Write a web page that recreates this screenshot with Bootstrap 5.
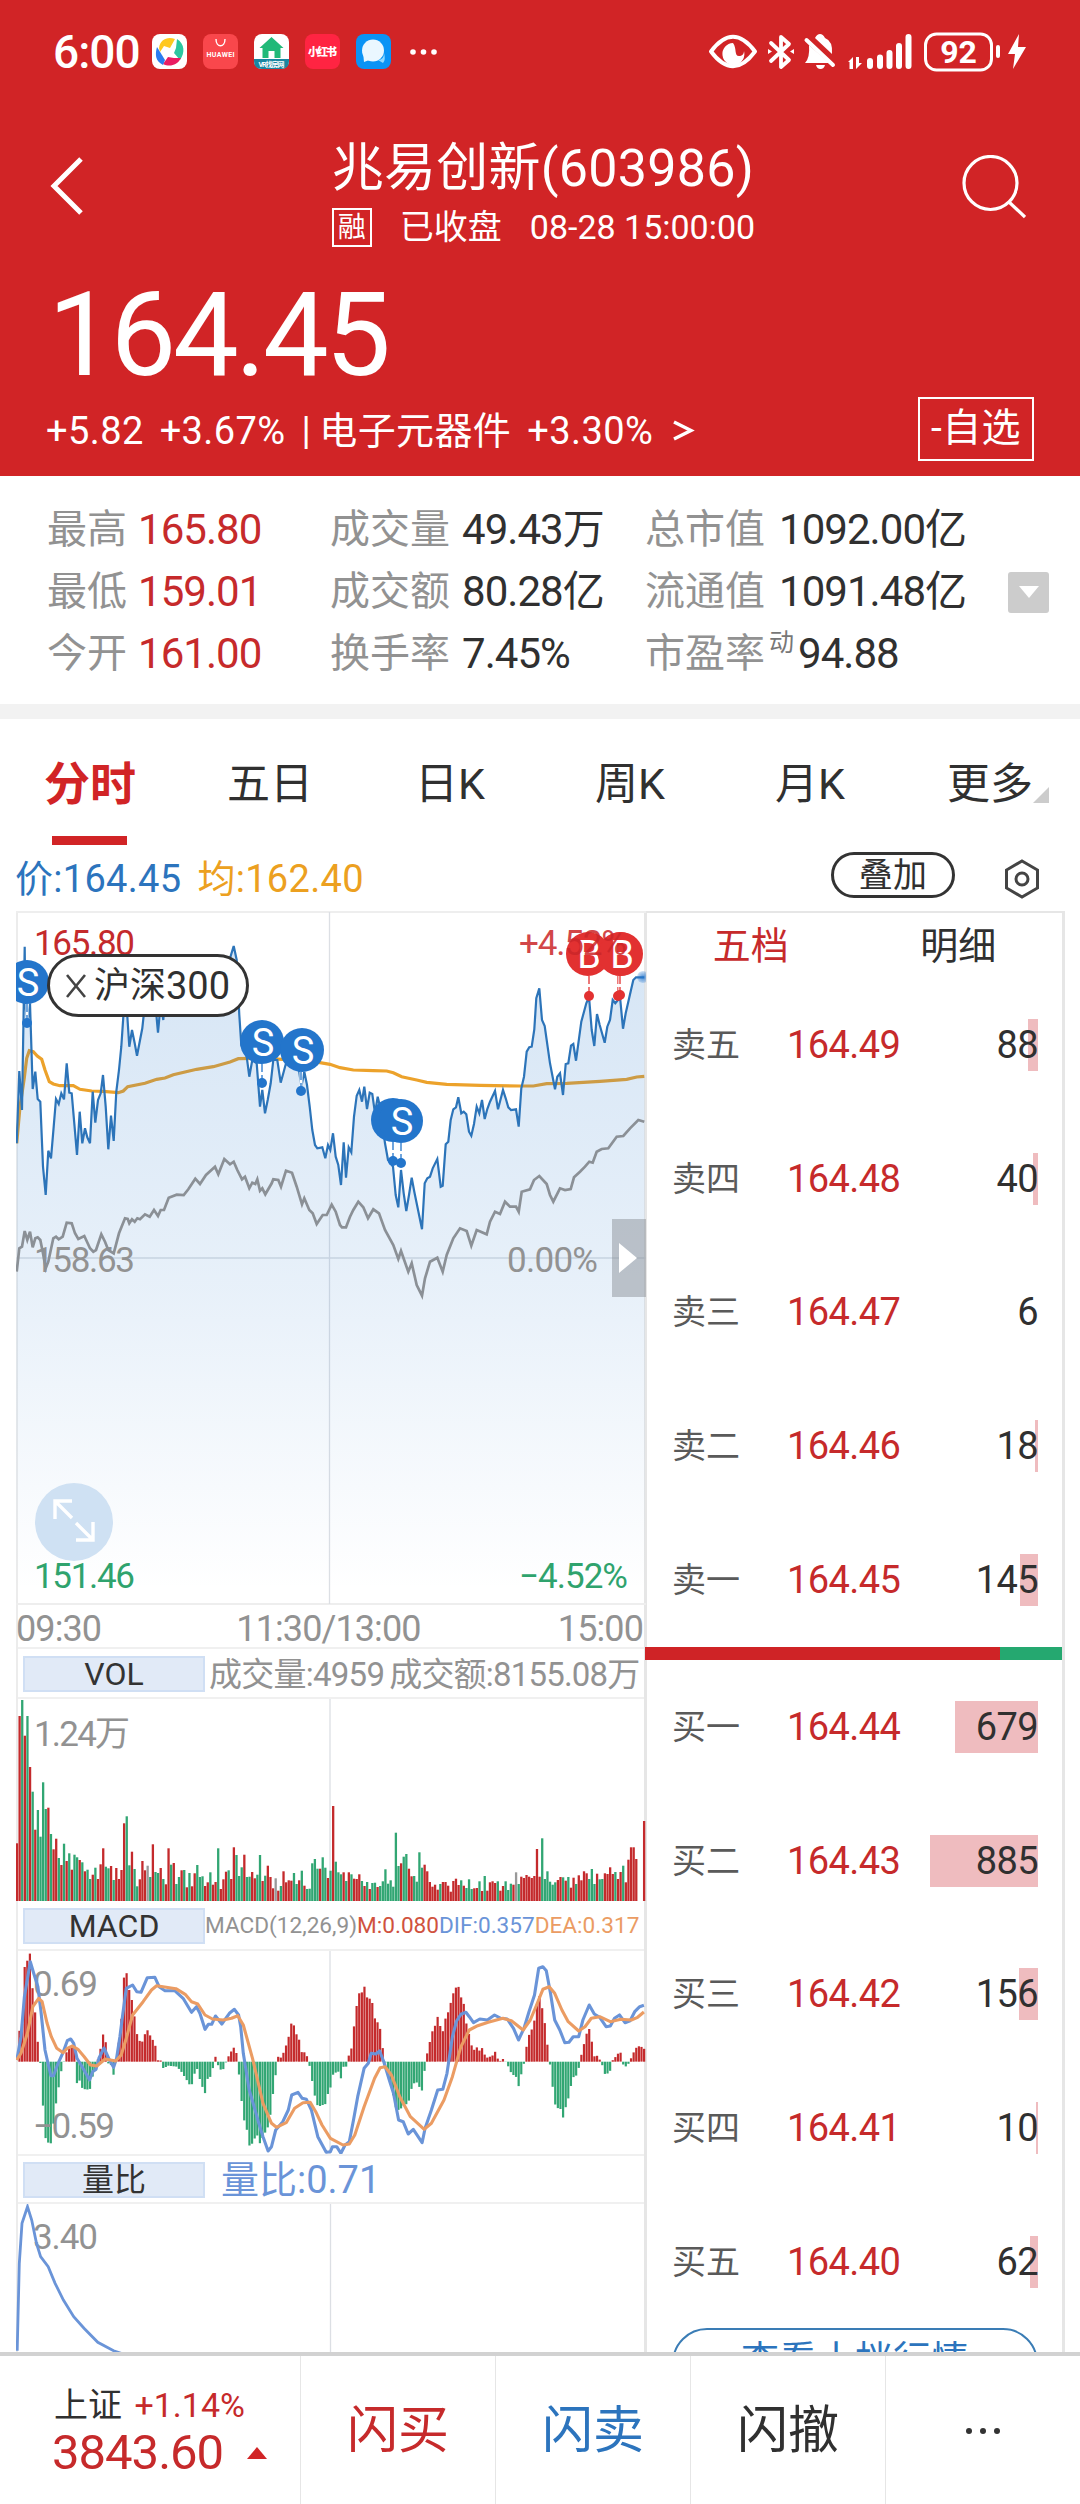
<!DOCTYPE html>
<html lang="zh-CN">
<head>
<meta charset="utf-8">
<meta name="viewport" content="width=device-width, initial-scale=1">
<title>兆易创新(603986)</title>
<link rel="stylesheet" href="https://cdn.jsdelivr.net/npm/bootstrap@5.3.0/dist/css/bootstrap.min.css">
<style>
:root{--up:#c62a2b;--brand:#d12426;--down:#2fa36d;--ink:#303030;--muted2:#929292;--blue:#2c74bd}
body{width:1080px;height:2504px;overflow:hidden;background:#fff;color:var(--ink);font-family:Roboto,"Noto Sans CJK SC",sans-serif;line-height:1}
svg{display:block;flex:none}
.c-up{color:var(--up)}.c-blue{color:var(--blue)}.c-grey{color:var(--muted2)}
.hero{background:var(--brand);height:476px;color:#fff}
.statusbar{height:104px;padding:0 54px 0 53px}
.clock{font-size:46px;letter-spacing:-1px;width:99px}
.titlebar{height:154px;padding:3px 54px 0 50px}
.nameblock{margin-left:41px}
.stockname{font-size:52px;line-height:60px;letter-spacing:.25px}
.stockstate{font-size:34px;line-height:40px;letter-spacing:0}
.rong{width:40px;height:39px;border:2px solid #fff;font-size:28px;line-height:35px;letter-spacing:0}
.bigprice{height:138px;padding-left:48px;font-size:117px;line-height:155px;letter-spacing:-3.3px}
.changes{height:68px;padding:2px 46px 0 46px;font-size:38px;letter-spacing:.4px}
.optbtn{width:116px;height:64px;border:2px solid #fff;font-size:39px;margin-top:-5px}
.stats{height:228px;padding:23px 31px 19px 47px}
.stats .lbl{font-size:40px;color:var(--muted2)}
.stats .val{font-size:42px;letter-spacing:-.95px}
.st-row{height:62px;white-space:nowrap}
.st1{width:283px}.st2{width:315px}
.st1 .lbl{width:91px}.st2 .lbl{width:132px}.st3 .lbl{width:134px}
.st3 .lbl.pe{width:124px}.pe-sup{font-size:25px;color:#777;width:29px;margin-top:-24px}
.toggle-box{width:41px;height:41px;background:#ccc;border-radius:3px}
.gapbar{height:15px;background:#f2f2f2}
.ktabs{height:126px;font-size:43px}
.ktabs .nav-link{padding:0;color:var(--ink);height:126px;line-height:130px;position:relative}
.ktabs .nav-link.active{color:var(--brand);font-weight:700;font-size:46px}
.ktabs .nav-link.active::after{content:"";position:absolute;left:52px;bottom:0;width:75px;height:9px;background:var(--brand)}
.corner{position:absolute;right:31px;bottom:42px}
.inforow{height:66px;padding:2px 40px 0 15px;font-size:38px;letter-spacing:.3px}
.overlaybtn{width:124px;height:46px;border:3px solid #333;border-radius:23px;font-size:34px;margin-right:49px;margin-top:-9px}
.panes{height:1441px;overflow:hidden;padding:0 16px}
.leftcol{width:631px;border-left:2px solid #ececec;border-right:3px solid #e6e6e6;flex:none}
.leftcol svg{margin-left:-2px}
.timerow{height:44px;font-size:36px;letter-spacing:-.9px;color:var(--muted2);padding:6px 1px 0 0;border-bottom:2px solid #f0f0f0}
.timerow span{width:33.33%}
.timerow span:first-child{margin-left:-2px}
.indrow{height:50px;padding:2px 6px 0 5px;border-bottom:2px solid #f0f0f0;font-size:33px;white-space:nowrap}
.indname{width:182px;height:36px;background:#e1eaf7;border:2px solid #d0dff4;font-size:32px;flex:none;color:#333;margin-top:-1px}
.macdtxt{font-size:22.6px}
.book{width:418px;border-top:2px solid #e6e6e6;border-right:3px solid #e6e6e6;flex:none}
.bk-head{height:65px;font-size:38px;padding-top:14px}
.bk-row{height:133.8px;padding:0 24px 0 25px;font-size:38px;letter-spacing:-.6px}
.bk-row .nm{width:115px;font-size:34px;letter-spacing:0;color:#5a5a5a}
.bk-vol{position:relative;width:110px;height:52px;line-height:52px}
.bk-vol i{position:absolute;right:0;top:0;height:52px;background:#efbcbf}
.bk-vol b{position:relative;font-weight:400}
.split{height:13px;margin-left:-2px;background:#25a870}
.split div{width:85.2%;background:#cf2326}
.tenbtn{width:366px;height:70px;margin:-1px 0 0 25px;border:2px solid #3a7cb5;border-radius:35px;font-size:38px;color:var(--blue);padding-top:11px}
.dock{height:153px;border-top:4px solid #d2d2d2}
.dock>div{width:195px;border-left:1px solid #e6e6e6;font-size:51px}
.dock>div:first-child{width:300px;border:0;padding:2px 0 0 54px}
.idx1{font-size:34px;line-height:42px}.idx2{font-size:49px;line-height:54px;letter-spacing:-1px;margin-left:-2px}
.chartbox{position:relative}
.hs300{position:absolute;left:29px;top:43px;width:202px;height:63px;border:3px solid #333;border-radius:32px;background:#fff;font-size:38px}
.hs300 .cj{font-size:36px}
.sidetab{position:absolute;right:-2px;top:308px;width:34px;height:78px;background:rgba(130,136,142,.45)}
</style>
<script src="https://cdn.jsdelivr.net/npm/bootstrap@5.3.0/dist/js/bootstrap.bundle.min.js"></script>
</head>
<body>
<header class="hero">
  <div class="statusbar d-flex align-items-center">
    <span class="clock fw-medium">6:00</span>
    <svg width="290" height="36" viewBox="152 34 290 36">
      <rect x="152" y="34" width="35" height="35" rx="8" fill="#fff"/>
      <path d="M159 48c1-9 9-12 16-9l-5 9-6-2-4 6z" fill="#ffc820"/><path d="M177 39c8 5 8 14 3 21l-6-7 2-5z" fill="#2cc6a0"/><path d="M181 58c-4 8-12 9-18 6l5-7 6 1z" fill="#e91e63"/><path d="M157 47l8 13-2 5c-8-4-8-11-6-18z" fill="#2b7cf0"/>
      <rect x="203" y="34" width="35" height="35" rx="8" fill="#f9474c"/>
      <path d="M216 39c0 9 9 9 9 0" fill="none" stroke="#fff" stroke-width="1.4"/>
      <text x="220.500" y="57" text-anchor="middle" font-size="7" font-weight="700" fill="#fff" textLength="28">HUAWEI</text>
      <rect x="254" y="34" width="35" height="35" rx="8" fill="#fff"/>
      <path d="M254 59h35v2q0 8-8 8h-19q-8 0-8-8z" fill="#1a86a0"/><path d="M271.500 37l12 11h-3v10h-6v-7h-6v7h-6v-10h-3z" fill="#21b978"/>
      <text x="271.500" y="67" text-anchor="middle" font-size="7" font-weight="700" fill="#fff" textLength="26">VR找房网</text>
      <rect x="305" y="34" width="35" height="35" rx="8" fill="#ff2442"/>
      <text x="322.500" y="56" text-anchor="middle" font-size="11" font-weight="900" fill="#fff" textLength="29">小红书</text>
      <rect x="356" y="34" width="35" height="35" rx="8" fill="#0a93f5"/>
      <circle cx="373" cy="50.500" r="11" fill="#eaf7ff"/><path d="M363 52l1 10 8-3z" fill="#eaf7ff"/><path d="M378 60q6 0 6-7 2 7-1 10z" fill="#8fd8ff"/>
      <g fill="#fff"><circle cx="413" cy="52" r="2.800"/><circle cx="423.500" cy="52" r="2.800"/><circle cx="434" cy="52" r="2.800"/></g>
    </svg>
    <svg class="ms-auto" width="318" height="40" viewBox="708 32 318 40">
      <g fill="none" stroke="#fff" stroke-width="4" stroke-linejoin="round" stroke-linecap="round">
        <path d="M711 51.500Q733 22 755 51.500Q733 81 711 51.500z"/>
        <path d="M771 43l18 17-8 7V37l8 7-18 17" stroke-width="3.800"/>
      </g>
      <path d="M733 43a11 11 0 1 0 11 8c0 3-2 5-5 5-5 0-2-8-6-13z" fill="#fff"/>
      <path d="M768 49l4 2.500-4 2.500zM794 49l-4 2.500 4 2.500z" fill="#fff"/>
      <path d="M815 38q2-4 5-4t5 4q8 3 7 16zM809 45l20 18h-24q5-5 4-18zM816 65h9q-1 4-4.500 4t-4.500-4z" fill="#fff"/>
      <path d="M806.500 40L833 65" stroke="#fff" stroke-width="4" stroke-linecap="round"/>
      <path d="M848 62l5-5v12h-3.500v-7zM856 57v12l6-6h-3v-6z" fill="#fff"/>
      <g stroke="#fff" stroke-width="6" stroke-linecap="round"><path d="M870 61v5M880 57.500v8.500M889.500 53v13M899 46v20M908.500 37v29"/></g>
      <rect x="925.500" y="34" width="66" height="36" rx="11" fill="none" stroke="#fff" stroke-width="3"/>
      <text x="958.500" y="63" text-anchor="middle" font-size="32" font-weight="700" fill="#fff">92</text>
      <path d="M998 47v9" stroke="#fff" stroke-width="4" stroke-linecap="round"/>
      <path d="M1019 34l-11 20h7l-2 15 13-22h-8z" fill="#fff"/>
    </svg>
  </div>
  <div class="titlebar d-flex align-items-start justify-content-between">
    <svg class="mt-5" width="34" height="64" viewBox="0 3 34 64"><path d="M31 7L4 34l27 27" fill="none" stroke="#fff" stroke-width="5"/></svg>
    <div class="nameblock d-flex flex-column">
      <div class="stockname mt-4 pt-2">兆易创新(603986)</div>
      <div class="stockstate d-flex align-items-center mt-1 pt-1"><span class="rong text-center">融</span><span class="ms-4 ps-1">已收盘</span><span class="ms-4 ps-1">08-28 15:00:00</span></div>
    </div>
    <svg class="mt-5" width="64" height="66" viewBox="962 155 64 66"><g fill="none" stroke="#fff" stroke-width="3.200"><circle cx="990.500" cy="183" r="26.500"/><path d="M1009 202l16 15"/></g></svg>
  </div>
  <div class="bigprice">164.45</div>
  <div class="changes d-flex align-items-center">
    <span>+5.82</span><span class="ms-3">+3.67%</span><span class="ms-3">|</span><span class="ms-2">电子元器件</span><span class="ms-3">+3.30%</span>
    <svg class="ms-3" width="26" height="26" viewBox="-2 0 26 26"><path d="M3 4l17 8.500L3 21" fill="none" stroke="#fff" stroke-width="3.400"/></svg>
    <span class="optbtn ms-auto d-flex align-items-center justify-content-center">-自选</span>
  </div>
</header>
<section class="stats d-flex">
  <div class="st1">
    <div class="st-row d-flex align-items-center"><span class="lbl">最高</span><span class="val c-up">165.80</span></div>
    <div class="st-row d-flex align-items-center"><span class="lbl">最低</span><span class="val c-up">159.01</span></div>
    <div class="st-row d-flex align-items-center"><span class="lbl">今开</span><span class="val c-up">161.00</span></div>
  </div>
  <div class="st2">
    <div class="st-row d-flex align-items-center"><span class="lbl">成交量</span><span class="val">49.43万</span></div>
    <div class="st-row d-flex align-items-center"><span class="lbl">成交额</span><span class="val">80.28亿</span></div>
    <div class="st-row d-flex align-items-center"><span class="lbl">换手率</span><span class="val">7.45%</span></div>
  </div>
  <div class="st3 flex-fill">
    <div class="st-row d-flex align-items-center"><span class="lbl">总市值</span><span class="val">1092.00亿</span></div>
    <div class="st-row d-flex align-items-center"><span class="lbl">流通值</span><span class="val">1091.48亿</span></div>
    <div class="st-row d-flex align-items-center"><span class="lbl pe">市盈率</span><span class="pe-sup">动</span><span class="val">94.88</span></div>
  </div>
  <div class="toggle-box align-self-center d-flex align-items-center justify-content-center"><svg width="22" height="14" viewBox="0 0 22 14"><path d="M1 1h20L11 13z" fill="#fff"/></svg></div>
</section>
<div class="gapbar"></div>
<nav class="ktabs nav nav-fill text-center">
  <a class="nav-link active col-2">分时</a><a class="nav-link col-2">五日</a><a class="nav-link col-2">日K</a><a class="nav-link col-2">周K</a><a class="nav-link col-2">月K</a>
  <a class="nav-link col-2">更多<svg class="corner" width="16" height="16"><path d="M16 0v16H0z" fill="#ccc"/></svg></a>
</nav>
<div class="inforow d-flex align-items-center">
  <span class="c-blue">价:164.45</span><span class="ms-3" style="color:#eca020">均:162.40</span>
  <span class="overlaybtn ms-auto d-flex align-items-center justify-content-center">叠加</span>
  <svg width="36" height="40" viewBox="0 0 36 40"><g fill="none" stroke="#444" stroke-width="3"><path d="M18 2l15.500 9v18L18 38 2.500 29V11z"/><circle cx="18" cy="20" r="6"/></g></svg>
</div>
<main class="panes d-flex">
  <div class="leftcol">
    <div class="chartbox">
      <svg id="priceChart" width="630" height="694" viewBox="16 911 630 694" font-size="35"></svg>
      <div class="hs300 d-flex align-items-center"><svg class="ms-3" width="20" height="24" viewBox="0 0 20 24" style="margin-right:8px"><path d="M1 1l18 22M19 1L1 23" stroke="#444" stroke-width="2.600"/></svg><span class="cj">沪深</span><span>300</span></div>
      <div class="sidetab d-flex align-items-center justify-content-center"><svg width="20" height="30"><path d="M1 0l18 15L1 30z" fill="#fff"/></svg></div>
    </div>
    <div class="timerow d-flex"><span>09:30</span><span class="text-center">11:30/13:00</span><span class="text-end ms-auto">15:00</span></div>
    <div class="indrow d-flex align-items-center c-grey"><span class="indname d-flex align-items-center justify-content-center">VOL</span><span style="margin-left:4px;letter-spacing:-.75px">成交量:4959</span><span style="margin-left:5px;letter-spacing:-.8px">成交额:8155.08万</span></div>
    <svg id="volChart" width="630" height="202" viewBox="16 1699 630 202" font-size="35"></svg>
    <div class="indrow d-flex align-items-center macdtxt c-grey"><span class="indname d-flex align-items-center justify-content-center">MACD</span><span>MACD(12,26,9)</span><span style="color:#d0523e">M:0.080</span><span style="color:#6a94d8">DIF:0.357</span><span style="color:#eb9c63">DEA:0.317</span></div>
    <svg id="macdChart" width="630" height="203" viewBox="16 1951 630 203" font-size="35"></svg>
    <div class="indrow d-flex align-items-center" style="border-top:2px solid #f0f0f0"><span class="indname d-flex align-items-center justify-content-center">量比</span><span style="margin-left:16px;color:#6a94d8;font-size:38px">量比:0.71</span></div>
    <svg id="ratioChart" width="630" height="160" viewBox="16 2204 630 160" font-size="35"></svg>
  </div>
  <div class="book">
    <div class="bk-head d-flex text-center"><span class="c-up w-50">五档</span><span class="w-50">明细</span></div>
    <div id="sells"></div>
    <div class="split d-flex"><div></div></div>
    <div id="buys"></div>
    <div class="tenbtn text-center">查看十档行情</div>
  </div>
</main>
<footer class="dock d-flex">
  <div class="d-flex flex-column justify-content-center">
    <div class="idx1">上证 <span class="c-up ms-1">+1.14%</span></div>
    <div class="idx2 c-up d-flex align-items-center">3843.60<svg class="ms-4" width="20" height="12"><path d="M10 0l10 12H0z" fill="#d12426"/></svg></div>
  </div>
  <div class="d-flex align-items-center justify-content-center c-up">闪买</div>
  <div class="d-flex align-items-center justify-content-center c-blue">闪卖</div>
  <div class="d-flex align-items-center justify-content-center">闪撤</div>
  <div class="d-flex align-items-center justify-content-center"><svg width="36" height="8"><g fill="#333"><circle cx="4" cy="4" r="3"/><circle cx="18" cy="4" r="3"/><circle cx="32" cy="4" r="3"/></g></svg></div>
</footer>
<script>
const $ = id => document.getElementById(id);
const toPath = (s, fx, fy) => 'M' + s.trim().split(/\s+/).map(p => { const [a, b] = p.split(',').map(Number); return fx(a).toFixed(1) + ' ' + fy(b).toFixed(1); }).join('L');
const label = (x, y, w, t, c) => `<text x="${x}" y="${y}" textLength="${w}" fill="${c}">${t}</text>`;
const GREY = '#929292', RED = '#c42a2c', GREEN = '#31a673';

/* price chart */
const price = `50,730 58,513 66,630 74,140 76,310 82,370 90,310 98,567 106,515 113,597 121,605 129,800 137,885 145,752 153,775 161,680 168,597 176,612 184,580 192,598 200,490 208,578 215,580 223,670 231,765 239,635 247,730 255,685 262,712 270,730 278,575 286,668 294,600 302,580 309,525 317,620 325,748 333,647 341,723 349,575 357,510 364,440 372,320 380,320 388,440 396,390 404,430 411,467 419,425 427,385 435,310 450,260 466,310 474,398 482,310 490,360 495,290 520,250 560,300 590,260 605,350 620,300 650,240 690,175 701,138 710,180 718,345 724,435 740,470 748,530 757,480 770,490 780,620 787,570 795,640 803,600 812,550 820,480 832,480 842,548 850,520 858,490 880,470 897,510 904,560 913,515 921,555 929,620 937,690 945,735 952,745 967,742 976,775 984,735 991,750 999,700 1007,770 1015,795 1023,855 1031,727 1038,833 1046,742 1054,757 1062,650 1070,587 1078,570 1086,605 1093,560 1101,627 1109,578 1117,582 1125,640 1133,590 1140,620 1155,730 1164,780 1179,800 1187,885 1195,922 1203,810 1211,880 1219,933 1227,885 1235,833 1243,875 1266,988 1274,850 1282,835 1290,830 1298,805 1312,777 1322,860 1328,857 1337,733 1345,725 1352,660 1360,628 1368,622 1375,592 1384,640 1391,635 1399,643 1407,695 1414,707 1422,672 1430,620 1438,640 1446,600 1454,657 1462,627 1470,605 1485,573 1494,628 1509,570 1517,595 1525,622 1533,630 1548,628 1556,680 1564,565 1572,530 1580,455 1588,442 1595,440 1603,388 1609,295 1618,265 1626,360 1634,378 1650,490 1665,568 1672,530 1680,520 1689,585 1697,492 1705,490 1713,437 1720,432 1728,482 1744,365 1759,310 1767,290 1775,390 1783,438 1791,342 1799,375 1814,428 1822,380 1830,360 1838,300 1846,310 1854,300 1861,300 1869,386 1877,340 1893,270 1900,240 1908,232 1933,232`;
const avg = `50,730 60,620 72,540 80,475 88,452 100,455 112,468 125,478 135,510 148,545 160,552 180,557 220,557 240,568 275,573 310,574 355,578 370,573 383,560 435,550 470,538 495,534 520,524 590,508 640,500 690,486 715,476 780,475 850,478 960,488 990,493 1020,503 1060,510 1120,512 1160,513 1180,518 1205,530 1250,540 1280,547 1340,553 1440,556 1560,558 1600,558 1640,551 1700,550 1800,544 1880,538 1910,531 1933,529`;
const index = `50,1115 58,1045 66,1040 74,993 82,1020 90,995 98,1042 106,1015 113,1012 121,1020 129,1060 137,1105 145,1085 160,1015 168,1010 176,1018 188,1010 200,968 215,970 225,1000 235,1017 253,1008 270,1045 280,1055 288,1050 304,1003 315,1025 325,1050 341,1060 357,1000 375,955 383,957 388,970 396,958 404,965 412,955 420,958 435,943 449,950 462,930 474,948 482,930 492,930 506,893 530,884 551,885 565,868 586,836 600,852 618,825 645,800 655,823 673,777 690,793 701,785 712,810 726,838 735,830 748,865 757,848 766,852 772,838 780,872 787,865 796,883 815,850 820,838 835,840 843,860 858,812 876,818 890,860 906,913 913,895 928,930 938,940 950,972 968,945 980,945 995,914 1007,935 1020,975 1026,982 1038,982 1050,950 1060,930 1075,905 1090,922 1104,955 1120,928 1137,940 1155,990 1180,1035 1195,1077 1203,1053 1225,1115 1235,1090 1250,1155 1266,1187 1275,1135 1290,1085 1312,1073 1328,1115 1340,1065 1360,1015 1380,985 1400,993 1414,1037 1430,990 1460,1003 1470,965 1485,935 1500,942 1515,905 1530,920 1548,920 1556,935 1565,875 1590,868 1602,840 1618,828 1640,852 1650,885 1660,905 1680,865 1695,870 1712,867 1722,832 1740,815 1755,800 1768,785 1778,788 1790,755 1805,747 1825,745 1850,710 1870,708 1890,685 1915,660 1933,665`;
const third = v => v / 3, py = v => 900 + v / 3;
const pp = toPath(price, third, py);
const marks = [['S',27,982,27,1023],['S',262,1042,262,1083],['S',302,1050,301,1091],['',393,1120,393,1161],['S',401,1121,401,1163],['B',588,954,589,996],['',620,954,618,996],['B',621,954,620,995]];
$('priceChart').innerHTML = `<defs><linearGradient id="fade" x1="0" y1="920" x2="0" y2="1590" gradientUnits="userSpaceOnUse"><stop offset="0" stop-color="#2a7acc" stop-opacity=".2"/><stop offset=".55" stop-color="#2a7acc" stop-opacity=".11"/><stop offset="1" stop-color="#2a7acc" stop-opacity="0"/></linearGradient><radialGradient id="glow"><stop offset="0" stop-color="#2374cc" stop-opacity=".8"/><stop offset="1" stop-color="#2374cc" stop-opacity=".2"/></radialGradient></defs>
<path d="M16 912H646M16 1604H646" stroke="#eee" stroke-width="2"/><path d="M329.500 912V1604M16 1258H646" stroke="#dcdfe4" stroke-width="1.300"/>
<path d="${toPath(avg, third, py)}" fill="none" stroke="#eca22b" stroke-width="3.200"/>
<path d="${pp}L645 1604L16 1604z" fill="url(#fade)"/>
${label(34,1272,101,'158.63',GREY)}${label(507,1272,91,'0.00%',GREY)}
<path d="${toPath(index, third, py)}" fill="none" stroke="#8b9096" stroke-width="2.700"/>
<path d="${pp}" fill="none" stroke="#2c74b9" stroke-width="2.200"/><circle cx="643" cy="977" r="6" fill="url(#glow)"/>` +
label(34,955,101,'165.80',RED) + marks.map(([t,x,y,dx,dy]) => { const c = y < 960 ? '#e23131' : '#2375cb'; return `<path d="M${dx} ${y+22}V${dy}" stroke="#fff" stroke-width="3"/><path d="M${dx} ${y+22}V${dy}" stroke="${c}" stroke-width="1.300" stroke-dasharray="8 3"/><circle cx="${dx}" cy="${dy}" r="5" fill="${c}"/><circle cx="${x}" cy="${y}" r="22" fill="${c}"/><text x="${x+1}" y="${y+14}" text-anchor="middle" font-size="38" fill="#fff">${t}</text>`; }).join('') +
`<g opacity=".85">${label(519,955,108,'+4.52%','#cb2629')}</g>${label(34,1588,101,'151.46','#2fa36d')}${label(519,1588,109,'−4.52%','#2fa36d')}
<circle cx="74" cy="1522" r="39" fill="#cfe1f3"/><path d="M72 1518L55 1501M55 1519V1501H72M76 1523L93 1540M93 1522V1540H76" fill="none" stroke="#fff" stroke-width="3.400"/>`;

/* volume: top of each bar in thirds of a pixel plus colour */
const vol = `490r 108r 60g 167r 108g 261r 335g 449r 390g 470g 307g 387g 383r 462g 508r 476r 534g 555r 491g 543r 520g 569r 524g 532g 540r 547g 574r 569g 597g 584r 563g 597r 553r 505r 560g 565g 558r 600g 564r 597r 570r 430r 409g 556g 515r 567g 619g 598r 543r 571r 557n 591g 493r 576g 579g 564r 597g 613r 505r 554g 549r 612g 591g 571r 570g 622r 579g 619r 580r 555g 591g 589g 618r 607r 577g 614r 606r 505g 627r 598r 575r 571g 597r 502r 525g 588g 562g 524r 591g 590g 576r 595r 584g 525g 603r 587g 557r 591r 625r 595n 632r 618g 574r 607r 601r 602r 579g 612g 601r 572g 617r 627g 626g 550g 537g 566g 566r 532g 563g 594r 572g 378r 545g 577g 583g 577r 603g 577r 583g 596r 597r 583r 603g 618r 606g 627r 609g 608g 621r 618g 604g 568g 611g 601g 620g 458g 558g 550r 530g 522g 566r 589r 588g 605g 517g 563g 554r 574r 606r 620r 614r 629r 612g 606r 606r 617r 635r 603r 596r 615r 601g 617r 624g 598g 627g 625r 624r 604g 633r 588g 632r 607r 604r 609r 604g 632r 618r 604g 630g 611g 614r 577n 612g 590r 594r 585r 590r 594r 588r 507r 590r 475g 597g 574g 605g 614g 607g 600r 591r 592g 602r 591g 623r 593r 612g 586r 601r 574r 580r 597g 567g 612g 581r 598g 597g 580r 582r 562r 582r 576g 597r 576r 557g 607r 539r 502r 502r 537r - - 423r`.split(' ');
let bars = '';
vol.forEach((v, i) => { if (v === '-') return; const y = 1680 + parseInt(v) / 3, x = 17 + i * 2.613; bars += `<rect x="${(x-1.15).toFixed(2)}" y="${y.toFixed(1)}" width="2.300" height="${(1901-y).toFixed(1)}" fill="${{r:RED,g:GREEN,n:'#999'}[v.at(-1)]}"/>`; });
$('volChart').innerHTML = `<path d="M330 1699V1901" stroke="#dcdfe4" stroke-width="1.300"/>` + bars + label(34,1746,96,'1.24万',GREY);

/* MACD */
const hist = `40,515 46,423 53,400 59,220 65,212 71,190 78,307 84,373 90,460 96,520 102,645 109,755 115,758 121,760 128,690 134,632 140,587 146,540 152,515 158,487 165,470 177,470 180,515 183,583 190,570 196,597 207,598 213,602 220,560 226,545 233,505 239,475 245,433 251,455 257,520 263,522 270,555 276,510 282,460 288,395 294,265 300,243 307,300 313,328 319,375 325,430 332,453 338,455 345,430 351,420 357,437 363,450 370,470 376,516 382,511 388,535 400,527 420,530 430,543 450,583 456,583 465,537 470,537 476,575 487,610 493,567 500,560 510,515 512,500 518,525 525,540 531,537 540,506 548,487 555,472 562,490 568,555 575,645 580,690 586,715 592,767 600,760 607,740 613,735 618,762 625,740 637,710 643,670 650,597 656,545 660,500 668,503 674,487 685,447 691,400 698,405 704,432 710,445 717,487 724,487 730,500 736,530 742,575 748,617 754,645 760,648 773,642 779,612 786,590 792,550 804,545 811,568 817,525 823,530 829,495 835,475 841,410 847,350 853,310 860,307 866,290 872,322 880,327 885,340 891,387 897,397 903,415 910,480 916,520 922,540 928,580 935,620 941,655 947,660 953,655 960,645 970,640 978,595 985,577 990,577 997,592 1003,602 1009,540 1015,490 1021,457 1027,425 1033,410 1040,380 1046,408 1052,425 1058,387 1064,370 1071,338 1077,310 1083,293 1089,288 1095,320 1102,342 1108,400 1114,430 1120,465 1127,480 1133,472 1139,482 1145,473 1151,493 1158,503 1170,497 1176,484 1183,507 1190,514 1195,507 1201,515 1208,530 1214,547 1220,555 1226,560 1232,590 1239,550 1245,520 1251,470 1257,435 1263,420 1270,390 1276,340 1282,318 1288,353 1294,395 1300,458 1307,525 1313,590 1319,643 1326,655 1332,657 1338,683 1344,652 1350,627 1357,585 1363,560 1370,556 1376,530 1382,490 1388,460 1394,430 1400,417 1407,460 1413,503 1419,497 1425,509 1432,528 1438,555 1444,550 1450,542 1456,510 1463,500 1469,490 1475,488 1481,525 1488,530 1494,520 1500,503 1507,483 1513,471 1520,468 1526,472 1532,478`.split(' ').map(p => p.split(',').map(Number));
const dif = `40,510 50,440 58,320 72,215 80,250 90,290 97,360 107,480 115,525 121,557 127,557 138,520 150,487 160,452 168,447 175,460 183,505 195,530 213,570 220,545 228,538 235,505 247,474 260,510 270,532 277,505 285,440 292,370 300,295 315,285 325,305 335,307 350,263 368,262 378,290 392,302 415,302 435,325 455,367 467,350 475,370 487,418 495,403 503,403 512,378 527,402 545,370 557,358 567,375 572,410 578,490 592,600 605,655 615,700 625,740 637,783 645,770 655,720 672,695 685,660 693,615 708,607 718,625 728,628 740,660 755,740 775,787 785,785 790,770 800,770 810,790 820,765 830,755 840,690 850,620 865,535 875,520 882,490 893,492 902,483 912,515 925,570 935,610 947,690 958,695 970,732 982,718 1003,758 1010,715 1025,660 1040,600 1052,598 1062,550 1075,440 1085,393 1095,373 1107,367 1115,380 1125,398 1140,387 1158,390 1175,375 1190,385 1205,387 1220,415 1232,450 1245,415 1257,365 1270,315 1280,235 1290,230 1298,242 1308,310 1318,390 1330,420 1342,458 1352,457 1362,440 1375,440 1385,390 1400,345 1412,372 1425,382 1440,410 1450,408 1460,385 1472,375 1485,398 1497,392 1508,365 1520,350 1530,346`;
const dea = `40,510 50,490 65,430 78,350 92,325 100,335 112,400 122,440 135,475 150,488 160,475 172,468 185,478 200,500 215,525 230,528 250,507 275,513 288,495 300,445 315,375 340,335 360,300 372,287 395,292 418,296 440,313 455,335 470,342 487,375 505,387 530,390 550,385 565,377 578,405 600,505 625,640 645,700 657,712 680,698 700,655 720,638 737,637 750,665 765,705 785,745 815,765 830,762 843,735 865,650 890,565 903,533 915,530 930,555 950,620 975,680 1008,718 1025,700 1055,630 1075,560 1095,470 1115,420 1135,407 1160,397 1195,385 1215,392 1243,420 1260,390 1275,345 1290,298 1305,290 1318,310 1335,360 1350,395 1375,423 1390,410 1405,385 1425,380 1450,395 1475,388 1500,390 1515,382 1530,366`;
const mx = v => v / 2.376, my = v => 1890 + v / 3, zero = my(515);
bars = '';
for (let i = 0; i < 241; i++) {
  const px = 40 + i * 6.21, k = Math.max(1, hist.findIndex(p => p[0] >= px)), [x0, y0] = hist[k-1], [x1, y1] = hist[k];
  const y = my(y0 + (y1 - y0) * (px - x0) / (x1 - x0));
  bars += `<rect x="${(mx(px)-1.1).toFixed(2)}" y="${Math.min(y, zero).toFixed(1)}" width="2.200" height="${Math.abs(y-zero).toFixed(1)}" fill="${y < zero ? RED : GREEN}"/>`;
}
$('macdChart').innerHTML = `<path d="M330 1951V2154" stroke="#dcdfe4" stroke-width="1.300"/>` + bars + label(33,1996,65,'0.69',GREY) + label(33,2138,82,'−0.59',GREY) +
`<g fill="none" stroke-width="3.100" stroke-linejoin="round"><path d="${toPath(dif, mx, my)}" stroke="#6a94d8"/><path d="${toPath(dea, mx, my)}" stroke="#eb9c63"/></g>`;

/* volume ratio */
$('ratioChart').innerHTML = `<path d="M330.500 2204V2364" stroke="#dcdfe4" stroke-width="1.300"/>` + label(33,2249,65,'3.40',GREY) +
`<path d="${toPath('25,632 28,370 32,250 40,200 46,240 53,310 59,350 70,380 80,430 92,480 107,530 122,565 142,607 165,632 190,650', v => v/1.452, v => 2140 + v/3)}" fill="none" stroke="#6a94d8" stroke-width="2.800"/>`;

/* order book */
const row = ([n, p, v, w]) => `<div class="bk-row d-flex align-items-center"><span class="nm">${n}</span><span class="c-up">${p}</span><span class="bk-vol ms-auto text-end"><i style="width:${w}px"></i><b>${v}</b></span></div>`;
$('sells').innerHTML = [['卖五','164.49',88,10],['卖四','164.48',40,5],['卖三','164.47',6,0],['卖二','164.46',18,3],['卖一','164.45',145,18]].map(row).join('');
$('buys').innerHTML = [['买一','164.44',679,83],['买二','164.43',885,108],['买三','164.42',156,19],['买四','164.41',10,2],['买五','164.40',62,8]].map(row).join('');
</script>
</body>
</html>
